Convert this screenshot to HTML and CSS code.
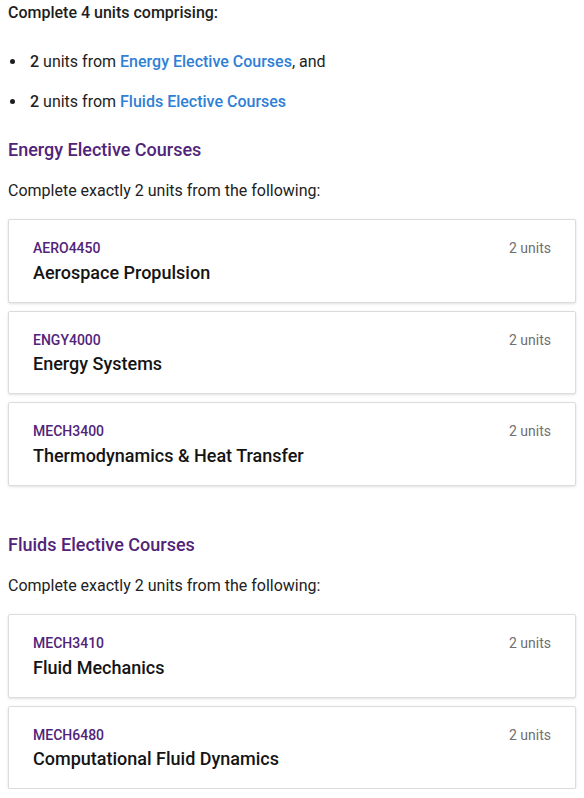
FILE: index.html
```html
<!DOCTYPE html>
<html lang="en">
<head>
<meta charset="utf-8">
<title>Electives</title>
<link rel="stylesheet" href="styles.css">
</head>
<body>
<main class="page">
  <p class="intro">Complete 4 units comprising:</p>
  <ul class="rules">
    <li><strong>2</strong> units from <a href="#energy">Energy Elective Courses</a>, and</li>
    <li><strong>2</strong> units from <a href="#fluids">Fluids Elective Courses</a></li>
  </ul>

  <section class="group" id="energy">
    <h3 class="group-title">Energy Elective Courses</h3>
    <p class="group-desc">Complete exactly 2 units from the following:</p>
    <div class="cards">
      <article class="card">
        <div class="card-top"><span class="code">AERO4450</span><span class="units">2 units</span></div>
        <div class="title">Aerospace Propulsion</div>
      </article>
      <article class="card">
        <div class="card-top"><span class="code">ENGY4000</span><span class="units">2 units</span></div>
        <div class="title">Energy Systems</div>
      </article>
      <article class="card">
        <div class="card-top"><span class="code">MECH3400</span><span class="units">2 units</span></div>
        <div class="title">Thermodynamics &amp; Heat Transfer</div>
      </article>
    </div>
  </section>

  <section class="group" id="fluids">
    <h3 class="group-title">Fluids Elective Courses</h3>
    <p class="group-desc">Complete exactly 2 units from the following:</p>
    <div class="cards">
      <article class="card">
        <div class="card-top"><span class="code">MECH3410</span><span class="units">2 units</span></div>
        <div class="title">Fluid Mechanics</div>
      </article>
      <article class="card">
        <div class="card-top"><span class="code">MECH6480</span><span class="units">2 units</span></div>
        <div class="title">Computational Fluid Dynamics</div>
      </article>
    </div>
  </section>
</main>
</body>
</html>
```

FILE: styles.css
```css
html, body {
  margin: 0;
  padding: 0;
  background: #fff;
}

body {
  font-family: Roboto, "Noto Sans", "Liberation Sans", sans-serif;
  color: #1e1e1e;
}

.page {
  padding: 2px 8px 0 8px;
}

.intro {
  margin: 0;
  font-size: 16px;
  line-height: 22px;
  font-weight: 500;
}

.rules {
  margin: 27px 0 0 0;
  padding: 0;
  list-style: none;
  font-size: 16px;
  line-height: 22px;
}

.rules li {
  padding-left: 22px;
}

.rules li::before {
  content: "";
  display: inline-block;
  width: 5px;
  height: 5px;
  border-radius: 50%;
  background: #1e1e1e;
  margin-left: -20px;
  margin-right: 15px;
  vertical-align: 3px;
}

.rules li + li {
  margin-top: 18px;
}

.rules strong {
  font-weight: 500;
}

.rules a {
  color: #2f7fd6;
  text-decoration: none;
  font-weight: 500;
}

.group {
  display: flex;
  flex-direction: column;
}

#energy {
  margin-top: 25px;
}

#fluids {
  margin-top: 47.5px;
}

.group-title {
  margin: 0;
  font-size: 18px;
  line-height: 24px;
  font-weight: 500;
  color: #51247a;
}

.group-desc {
  margin: 18px 0 0 0;
  font-size: 16px;
  line-height: 22px;
  color: #222;
}

.cards {
  margin-top: 17px;
  display: flex;
  flex-direction: column;
  gap: 8px;
}

.card {
  border: 1px solid #dcdcdc;
  border-radius: 2px;
  background: #fff;
  box-shadow: 0 1px 3px rgba(0, 0, 0, 0.12);
  padding: 17px 24px 17px 24px;
}

.card-top {
  display: flex;
  justify-content: space-between;
  align-items: baseline;
  line-height: 22px;
}

.code {
  font-size: 14px;
  font-weight: 500;
  color: #51247a;
}

.units {
  font-size: 14px;
  color: #6f6f6f;
}

.title {
  margin-top: 1.5px;
  font-size: 18px;
  line-height: 24px;
  font-weight: 500;
  color: #141414;
}
```
